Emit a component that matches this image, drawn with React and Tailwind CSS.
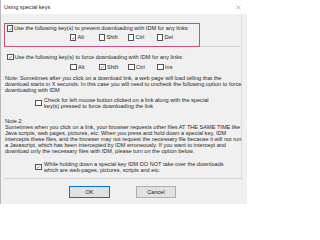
function Check({ on }) {
  return (
    <span className="flex h-[6.5px] w-[6.5px] shrink-0 items-center justify-center border border-[#555] bg-white">
      {on && (
        <svg viewBox="0 0 10 10" className="h-[6px] w-[6px]">
          <path d="M1.8 5.3 4.2 7.6 8.6 2.4" fill="none" stroke="#222" strokeWidth="1.1" />
        </svg>
      )}
    </span>
  );
}

function Key({ on, label }) {
  return (
    <div className="flex w-[29px] items-center gap-[1.5px]">
      <Check on={on} />
      <span>{label}</span>
    </div>
  );
}

function Line({ children }) {
  return <div className="h-[6px] whitespace-nowrap leading-[6px]">{children}</div>;
}

export default function App() {
  return (
    <div className="flex h-[204px] w-[247px] flex-col overflow-hidden border-l border-[#b9b9b9] bg-[#f0f0f0] font-['Liberation_Sans',Arial,sans-serif] text-[5.6px] text-[#262626]">
      {/* title bar */}
      <div className="flex h-[14px] shrink-0 items-center justify-between bg-white pl-[3px] pr-[6px]">
        <span>Using special keys</span>
        <svg viewBox="0 0 10 10" className="h-[5px] w-[5px]">
          <path d="M1 1 9 9 M9 1 1 9" stroke="#555" strokeWidth="0.8" />
        </svg>
      </div>

      <div className="flex w-[241px] flex-col border-r border-[#dcdcdc] pl-[3px]">
        {/* highlighted option */}
        <div className="relative z-10 mt-[9px] h-[24px] w-[196px] border-[1.5px] border-[#c9507f] pl-[1.5px] pt-[1px]">
          <div className="flex h-[7px] items-center gap-[1px] whitespace-nowrap">
            <Check on />
            <span>Use the following key(s) to prevent downloading with IDM for any links:</span>
          </div>
          <div className="mt-[2px] flex h-[7px] pl-[63px]">
            <Key on label="Alt" />
            <Key label="Shift" />
            <Key label="Ctrl" />
            <Key label="Del" />
          </div>
        </div>
        <div className="-mt-[1px] h-px w-[236px] bg-[#d6d6d6]" />

        <div className="mt-[6.5px] flex h-[7px] items-center gap-[1px] whitespace-nowrap pl-[3px]">
          <Check on />
          <span>Use the following key(s) to force downloading with IDM for any links:</span>
        </div>
        <div className="mt-[3px] flex h-[7px] pl-[66px]">
          <Key label="Alt" />
          <Key on label="Shift" />
          <Key label="Ctrl" />
          <Key label="Ins" />
        </div>

        <div className="mt-[4.5px] pl-[1px]">
          <Line>Note: Sometimes after you click on a download link, a web page will load telling that the</Line>
          <Line>download starts in X seconds. In this case you will need to uncheck the following option to force</Line>
          <Line>downloading with IDM</Line>
        </div>

        <div className="mt-[4px] flex items-center gap-[2.5px] pl-[31px]">
          <Check />
          <div>
            <Line>Check for left mouse button clicked on a link along with the special</Line>
            <Line>key(s) pressed to force downloading the link</Line>
          </div>
        </div>

        <div className="mt-[9px] pl-[1px]">
          <Line>Note 2:</Line>
          <Line>Sometimes when you click on a link, your browser requests other files AT THE SAME TIME like</Line>
          <Line>Java scripts, web pages, pictures, etc. When you press and hold down a special key, IDM</Line>
          <Line>intercepts these files, and the browser may not request the necessary file because it will not run</Line>
          <Line>a Javascript, which has been intercepted by IDM erroneously. If you want to intercept and</Line>
          <Line>download only the necessary files with IDM, please turn on the option below.</Line>
        </div>

        <div className="mt-[7px] flex items-center gap-[2.5px] pl-[31px]">
          <Check on />
          <div>
            <Line>While holding down a special key IDM DO NOT take over the downloads</Line>
            <Line>which are web-pages, pictures, scripts and etc.</Line>
          </div>
        </div>

        <div className="mt-[5px] h-px w-[238px] bg-[#d6d6d6]" />
      </div>

      {/* buttons */}
      <div className="mt-[7px] flex gap-[26px] pl-[68px]">
        <button className="flex h-[12px] w-[41px] items-center justify-center border border-[#0078d7] bg-[#e1e1e1]">
          OK
        </button>
        <button className="flex h-[12px] w-[40px] items-center justify-center border border-[#adadad] bg-[#e1e1e1]">
          Cancel
        </button>
      </div>
    </div>
  );
}
